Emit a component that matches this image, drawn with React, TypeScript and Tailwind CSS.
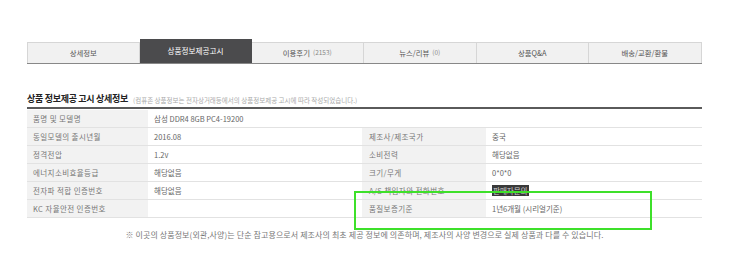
import React from 'react';

const tabs = [
  { label: '상세정보' },
  { label: '상품정보제공고시', active: true },
  { label: '이용후기', count: '(2153)' },
  { label: '뉴스/리뷰', count: '(0)' },
  { label: '상품Q&A' },
  { label: '배송/교환/환불' },
];

type Row = { l1: string; v1: React.ReactNode; l2?: string; v2?: React.ReactNode };

const rows: Row[] = [
  { l1: '품명 및 모델명', v1: '삼성 DDR4 8GB PC4-19200' },
  { l1: '동일모델의 출시년월', v1: '2016.08', l2: '제조사/제조국가', v2: '중국' },
  { l1: '정격전압', v1: '1.2v', l2: '소비전력', v2: '해당없음' },
  { l1: '에너지소비효율등급', v1: '해당없음', l2: '크기/무게', v2: '0*0*0' },
  {
    l1: '전자파 적합 인증번호',
    v1: '해당없음',
    l2: 'A/S 책임자와 전화번호',
    v2: <span className="bg-[#3a3a3a] px-[1px] text-[#cfcfcf]">판매자문의</span>,
  },
  { l1: 'KC 자율안전 인증번호', v1: '', l2: '품질보증기준', v2: '1년6개월 (시리얼기준)' },
];

export default function App() {
  return (
    <div
      className="relative h-[256px] w-[730px] overflow-hidden bg-white text-[#666]"
      style={{ fontFamily: '"Noto Sans CJK KR", "Noto Sans", sans-serif' }}
    >
      <div className="ml-[27px] w-[675px] pt-[40px]">
        {/* Tabs */}
        <div className="flex h-[24px] items-end border-b border-[#888]">
          {tabs.map((t) =>
            t.active ? (
              <div
                key={t.label}
                className="flex h-[24px] w-[112px] items-center justify-center bg-[#4b4b4d] text-[7.6px] text-white"
              >
                {t.label}
              </div>
            ) : (
              <div
                key={t.label}
                className="flex h-[21px] w-[112.5px] items-center justify-center border-r border-t border-[#d6d6d6] bg-[#f1f1f1] text-[7.4px] text-[#555] first:border-l"
              >
                {t.label}
                {t.count && <span className="ml-[3px] text-[6.5px] text-[#888]">{t.count}</span>}
              </div>
            )
          )}
        </div>

        {/* Heading */}
        <div className="mt-[30px] flex items-end gap-[5px] pb-[4px] leading-none">
          <span className="text-[9px] font-bold tracking-[-0.3px] text-[#222]">상품 정보제공 고시 상세정보</span>
          <span className="text-[6.5px] text-[#aaa]">
            (컴퓨존 상품정보는 전자상거래등에서의 상품정보제공 고시에 따라 작성되었습니다.)
          </span>
        </div>
        <div className="h-[2px] bg-[#5a5a5a]" />

        {/* Table */}
        <div className="mt-[1px] grid grid-cols-[121px_214px_124px_216px] text-[7.5px]">
          {rows.map((r) => (
            <React.Fragment key={r.l1}>
              <div className="flex h-[18px] items-center border-b border-[#e2e2e2] bg-[#f2f2f2] pl-[6px] tracking-[0.4px] text-[#777]">
                {r.l1}
              </div>
              {r.l2 ? (
                <>
                  <div className="flex h-[18px] items-center border-b border-[#e2e2e2] pl-[6px]">{r.v1}</div>
                  <div className="flex h-[18px] items-center border-b border-[#e2e2e2] bg-[#f2f2f2] pl-[7px] tracking-[0.4px] text-[#777]">
                    {r.l2}
                  </div>
                  <div className="flex h-[18px] items-center border-b border-[#e2e2e2] pl-[6px]">{r.v2}</div>
                </>
              ) : (
                <div className="col-span-3 flex h-[18px] items-center border-b border-[#e2e2e2] pl-[6px]">{r.v1}</div>
              )}
            </React.Fragment>
          ))}
        </div>

        <p className="mt-[11px] text-center text-[8px] tracking-[0.1px] text-[#777]">
          ※ 이곳의 상품정보(외관,사양)는 단순 참고용으로서 제조사의 최초 제공 정보에 의존하며, 제조사의 사양 변경으로 실제 상품과 다를 수 있습니다.
        </p>
      </div>

      {/* Green highlight box */}
      <div className="absolute left-[354px] top-[191px] h-[39px] w-[298px] border-2 border-[#3ee02a]" />
    </div>
  );
}
